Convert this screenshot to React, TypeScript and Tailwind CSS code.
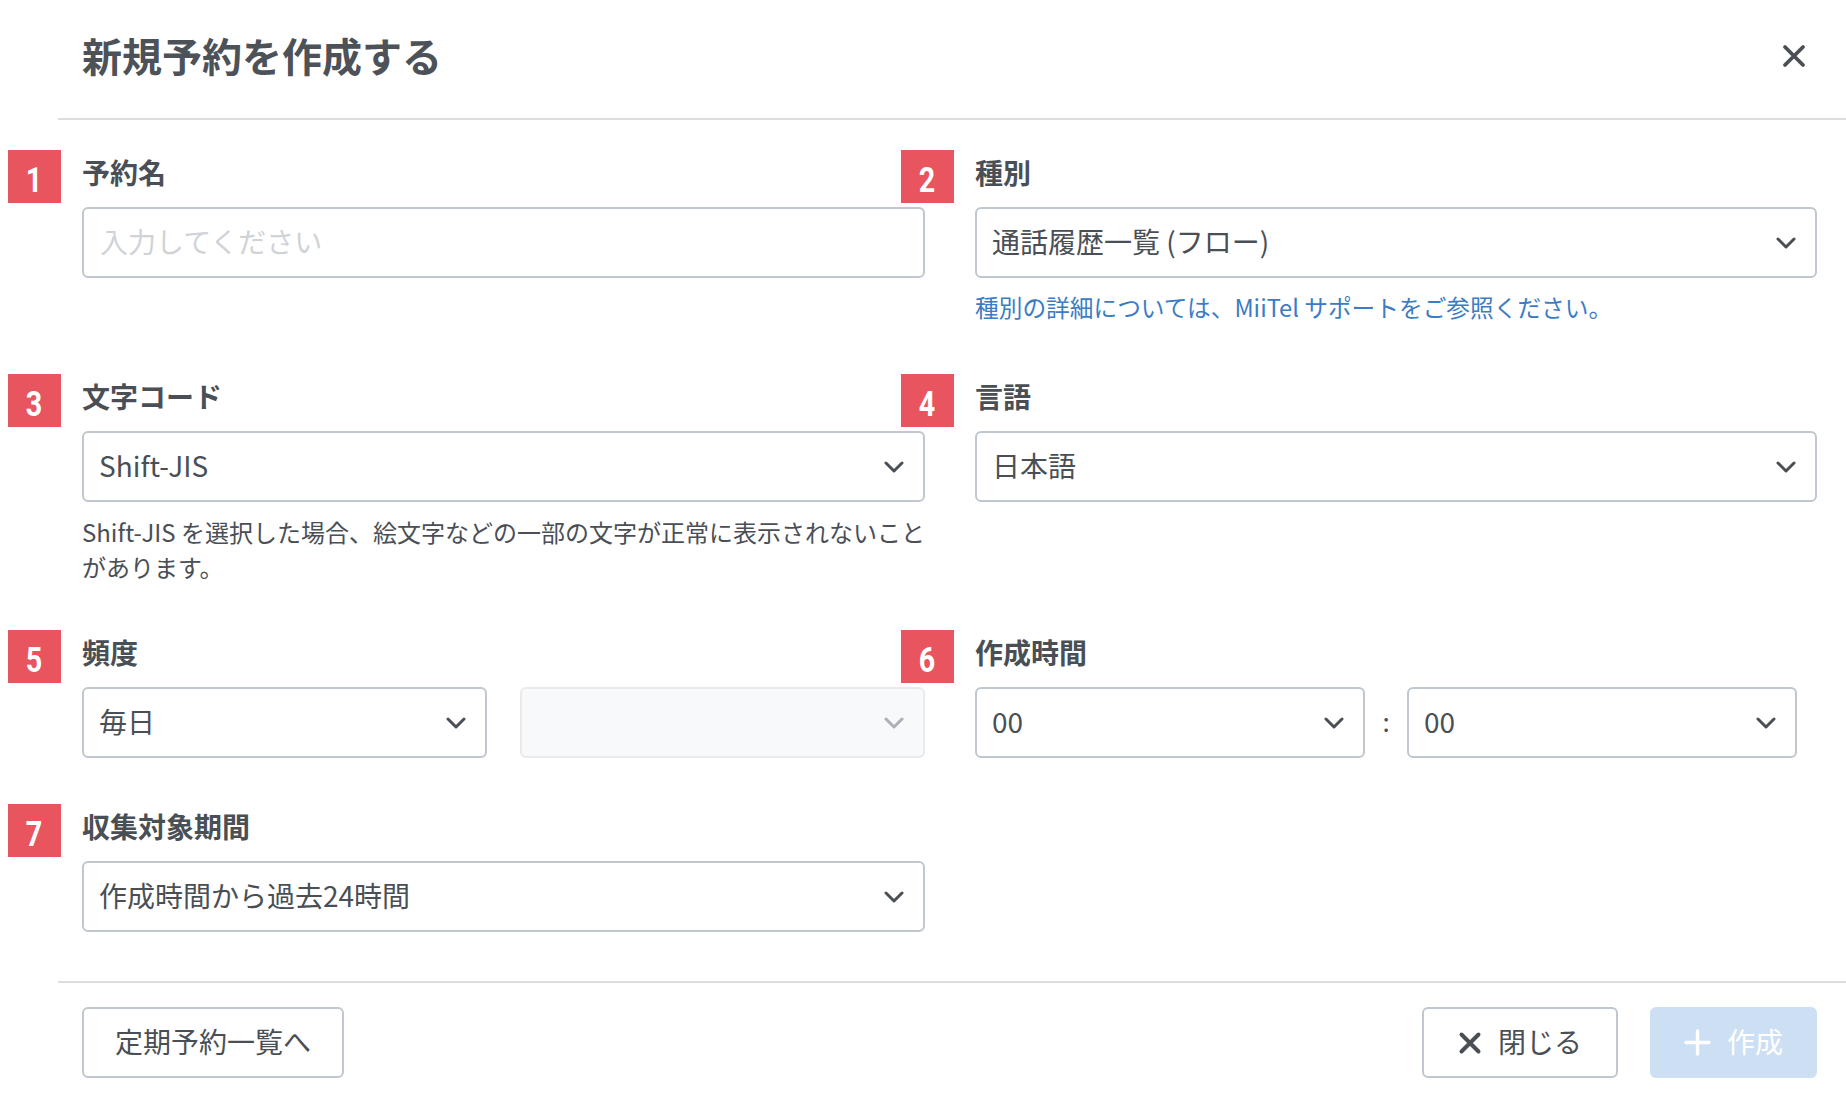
import React from "react";

const FONT = { fontFamily: '"Noto Sans CJK JP", "Noto Sans", sans-serif' };

function Chevron({ color = "#4a4f55" }: { color?: string }) {
  return (
    <svg width="20" height="12" viewBox="0 0 20 12" fill="none">
      <polyline points="2,2 10,10 18,2" stroke={color} strokeWidth="3" strokeLinecap="round" strokeLinejoin="round" />
    </svg>
  );
}

function Badge({ n }: { n: number }) {
  return (
    <div className="absolute left-[-74px] top-[-2px] w-[53px] h-[53px] bg-[#e8555f] text-white flex items-center justify-center pt-[7px]">
      <span
        className="block font-bold text-[35px] leading-none scale-x-[0.82]"
        style={{ fontFamily: 'Roboto, "Liberation Sans", sans-serif' }}
      >
        {n}
      </span>
    </div>
  );
}

function Field({ n, label, children }: { n: number; label: string; children: React.ReactNode }) {
  return (
    <div className="relative">
      <Badge n={n} />
      <div className="text-[28px] font-bold leading-[40px] text-[#4a4f55]">{label}</div>
      <div className="mt-[15px]">{children}</div>
    </div>
  );
}

function Select({ value, disabled, className = "" }: { value?: string; disabled?: boolean; className?: string }) {
  return (
    <div
      className={
        "h-[71px] rounded-[6px] border-2 flex items-center justify-between pl-[15px] pr-[19px] text-[28px] text-[#4a4f55] " +
        (disabled ? "bg-[#f8f9fa] border-[#e8eaec] " : "bg-white border-[#c0c7ce] ") +
        className
      }
    >
      <span className="whitespace-nowrap mb-[4px]">{value ?? ""}</span>
      <Chevron color={disabled ? "#aab0b5" : "#4a4f55"} />
    </div>
  );
}

export default function App() {
  return (
    <div className="w-[1846px] h-[1098px] bg-white overflow-hidden text-[#4a4f55]" style={FONT}>
      {/* Header */}
      <div className="ml-[58px] h-[120px] border-b-2 border-[#dcdddf] flex items-center justify-between pl-[24px] pr-[40px] pb-[8px]">
        <h1 className="text-[40px] font-bold leading-[56px] text-[#4d5258]">新規予約を作成する</h1>
        <svg width="24" height="24" viewBox="0 0 24 24" fill="none" className="mt-[2px]">
          <path d="M3 3 L21 21 M21 3 L3 21" stroke="#4a4f55" strokeWidth="3.8" strokeLinecap="round" />
        </svg>
      </div>

      {/* Body */}
      <div className="pl-[82px] pr-[29px]">
        <div className="grid grid-cols-[843px_842px] gap-x-[50px] mt-[32px] items-start">
          <Field n={1} label="予約名">
            <div className="h-[71px] rounded-[6px] border-2 border-[#c0c7ce] flex items-center pl-[16px] text-[28px] text-[#cfd3d7]">
              <span className="mb-[4px]">入力してください</span>
            </div>
          </Field>
          <Field n={2} label="種別">
            <Select value="通話履歴一覧 (フロー)" />
            <div className="mt-[13px] text-[23.7px] leading-[33px] text-[#3b7cc4]">
              種別の詳細については、MiiTel サポートをご参照ください。
            </div>
          </Field>
        </div>

        <div className="grid grid-cols-[843px_842px] gap-x-[50px] mt-[52px] items-start">
          <Field n={3} label="文字コード">
            <Select value="Shift-JIS" />
            <div className="mt-[12px] text-[24px] leading-[35px] text-[#4a4f55] whitespace-nowrap">
              Shift-JIS を選択した場合、絵文字などの一部の文字が正常に表示されないこと
              <br />
              があります。
            </div>
          </Field>
          <Field n={4} label="言語">
            <Select value="日本語" />
          </Field>
        </div>

        <div className="grid grid-cols-[843px_842px] gap-x-[50px] mt-[48px] items-start">
          <Field n={5} label="頻度">
            <div className="grid grid-cols-2 gap-x-[33px]">
              <Select value="毎日" />
              <Select disabled />
            </div>
          </Field>
          <Field n={6} label="作成時間">
            <div className="flex items-center">
              <Select value="00" className="w-[390px]" />
              <span className="w-[42px] text-center text-[26px] text-[#4a4f55] mb-[4px]">:</span>
              <Select value="00" className="w-[390px]" />
            </div>
          </Field>
        </div>

        <div className="grid grid-cols-[843px_842px] gap-x-[50px] mt-[48px] items-start">
          <Field n={7} label="収集対象期間">
            <Select value="作成時間から過去24時間" />
          </Field>
          <div />
        </div>
      </div>

      {/* Footer */}
      <div className="ml-[58px] mt-[49px] border-t-2 border-[#dcdddf] pt-[24px] pl-[24px] pr-[29px] flex items-center justify-between">
        <button className="w-[262px] h-[71px] rounded-[6px] border-2 border-[#c0c7ce] bg-white text-[28px] text-[#4a4f55] flex items-center justify-center">
          <span className="mb-[3px]">定期予約一覧へ</span>
        </button>
        <div className="flex items-center gap-[32px]">
          <button className="w-[196px] h-[71px] rounded-[6px] border-2 border-[#c0c7ce] bg-white text-[28px] text-[#4a4f55] flex items-center justify-center gap-[16px]">
            <svg width="24" height="24" viewBox="0 0 24 24" fill="none">
              <path d="M3.5 3.5 L20.5 20.5 M20.5 3.5 L3.5 20.5" stroke="#4a4f55" strokeWidth="4" strokeLinecap="round" />
            </svg>
            <span className="mb-[3px]">閉じる</span>
          </button>
          <button className="w-[167px] h-[71px] rounded-[6px] bg-[#cddff3] text-[28px] text-white flex items-center justify-center gap-[16px]">
            <svg width="27" height="27" viewBox="0 0 27 27" fill="none">
              <path d="M13.5 2 L13.5 25 M2 13.5 L25 13.5" stroke="#ffffff" strokeWidth="3.4" strokeLinecap="round" />
            </svg>
            <span className="mb-[3px]">作成</span>
          </button>
        </div>
      </div>
    </div>
  );
}
